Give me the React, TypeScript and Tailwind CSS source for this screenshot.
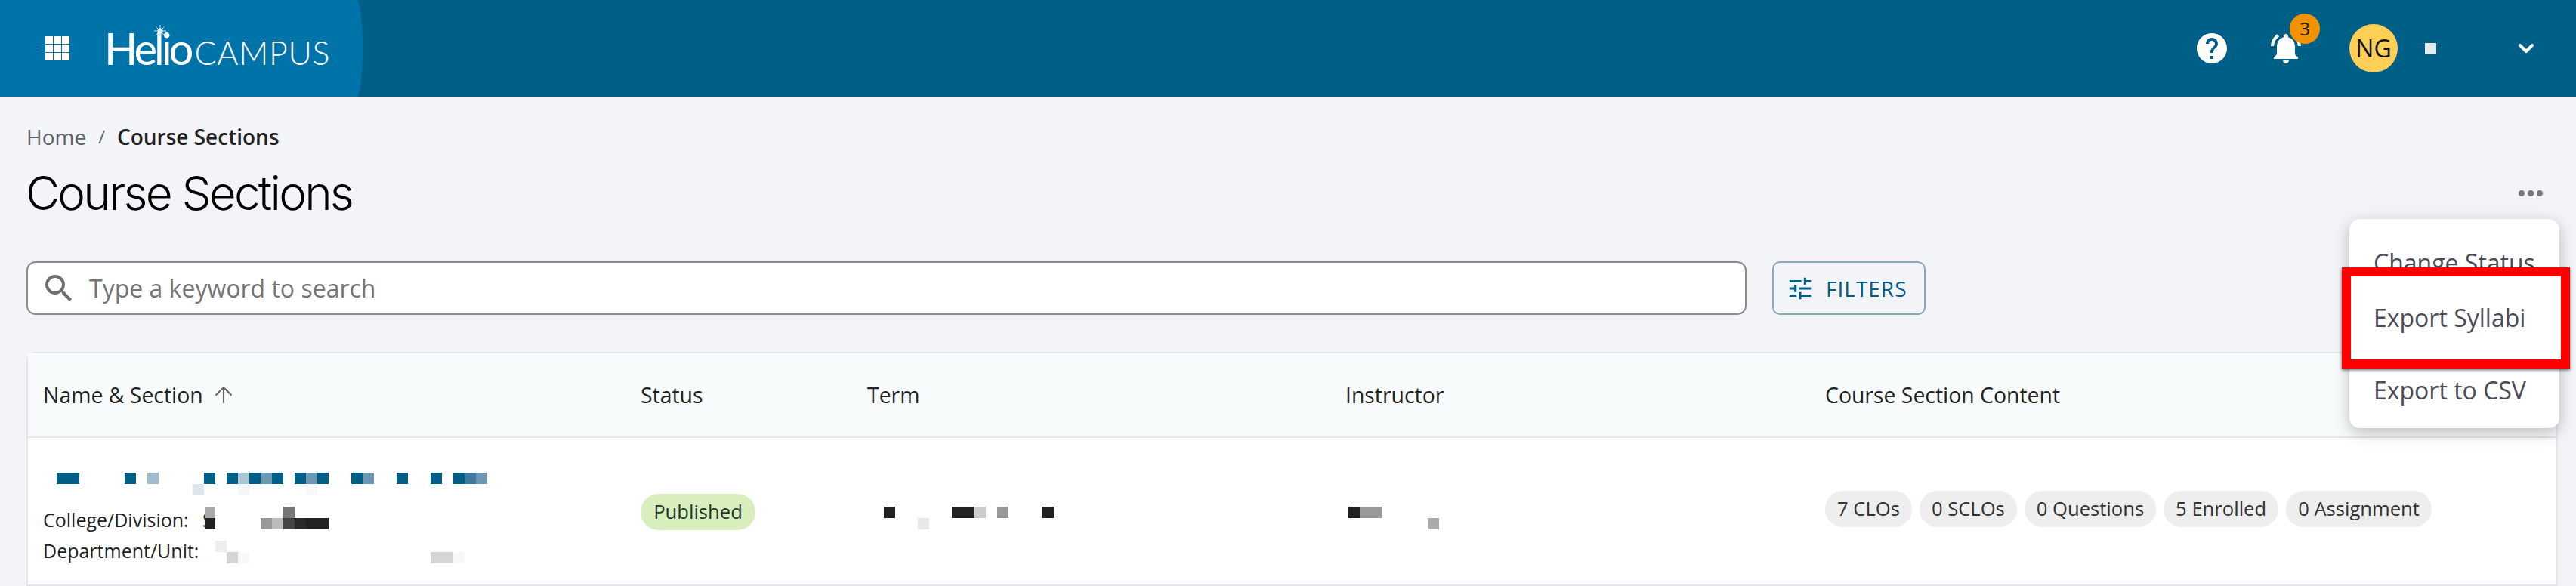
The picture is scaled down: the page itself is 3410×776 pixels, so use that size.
import React from 'react';
import { ArrowUp, ChevronDown } from 'lucide-react';
import { MdHelp, MdNotificationsActive, MdSearch, MdTune } from 'react-icons/md';

type Cell = [number, number, number, string];

// blurred-out text from the screenshot, 15px blocks
const Mosaic: React.FC<{ cells: Cell[]; width: number; height?: number; className?: string }> = ({
  cells,
  width,
  height = 30,
  className,
}) => (
  <svg width={width} height={height} className={className} shapeRendering="crispEdges">
    {cells.map(([x, y, w, fill], i) => (
      <rect key={i} x={x} y={y} width={w} height={15} fill={fill} />
    ))}
  </svg>
);

const B = '#005f87';
const M = '#6a97b2';

const titleCells: Cell[] = [
  [0, 0, 30, B], [90, 0, 15, B], [120, 0, 15, '#9fbccf'], [195, 0, 15, B], [225, 0, 15, B],
  [240, 0, 15, '#adc6d6'], [255, 0, 15, B], [270, 0, 15, M], [285, 0, 15, B], [315, 0, 15, B],
  [330, 0, 15, M], [345, 0, 15, B], [390, 0, 15, B], [405, 0, 15, M], [450, 0, 15, B],
  [495, 0, 15, B], [525, 0, 15, B], [540, 0, 15, '#3c7aa0'], [555, 0, 15, M],
  [180, 15, 15, '#dde6ed'], [240, 15, 15, '#f4f7f9'], [330, 15, 15, '#f6f8fb'],
];
const collegeCells: Cell[] = [
  [0, 0, 13, '#aaaaaa'], [0, 15, 13, '#222222'], [103, 0, 15, '#777777'], [73, 15, 15, '#999999'],
  [88, 15, 15, '#bbbbbb'], [103, 15, 15, '#444444'], [118, 15, 15, '#2a2a2a'], [133, 15, 30, '#222222'],
];
const deptCells: Cell[] = [
  [0, 0, 15, '#eeeeee'], [15, 15, 15, '#d5d5d5'], [30, 15, 15, '#f8f8f8'], [285, 15, 30, '#d5d5d5'], [315, 15, 15, '#f8f8f8'],
];
const termCells: Cell[] = [
  [0, 0, 15, '#222222'], [45, 15, 15, '#e8e8e8'], [90, 0, 30, '#222222'], [120, 0, 15, '#cccccc'],
  [150, 0, 15, '#999999'], [210, 0, 15, '#222222'],
];
const instructorCells: Cell[] = [
  [0, 0, 15, '#222222'], [15, 0, 30, '#999999'], [105, 15, 15, '#aaaaaa'],
];

const chips = ['7 CLOs', '0 SCLOs', '0 Questions', '5 Enrolled', '0 Assignment'];

const GridIcon = () => (
  <svg width="32" height="32" viewBox="0 0 32 32" fill="#fff" shapeRendering="crispEdges">
    {[0, 11, 22].map((y) =>
      [0, 11, 22].map((x) => <rect key={`${x}-${y}`} x={x} y={y} width="10" height="10" />),
    )}
  </svg>
);

const Logo = () => (
  <div className="relative ml-[46px] flex items-baseline font-['Lato',sans-serif] leading-none text-white">
    <span className="text-[58px] font-normal tracking-[-4px]">Helio</span>
    <span className="ml-[5px] text-[43px] font-light tracking-[0.7px]">CAMPUS</span>
    <svg width="16" height="16" viewBox="0 0 16 16" className="absolute left-[66px] top-[-2px]">
      <circle cx="8" cy="8" r="3.5" fill="#fff" />
      <path d="M8 0v16M0 8h16M2.5 2.5l11 11M13.5 2.5l-11 11" stroke="#cfe6f2" strokeWidth="1" />
    </svg>
  </div>
);

const Header = () => (
  <header className="flex h-[128px] bg-[#005f87] text-white">
    <div className="flex w-[480px] items-center rounded-tr-[8px_64px] rounded-br-[8px_64px] bg-[#0074a8] pl-[60px]">
      <GridIcon />
      <Logo />
    </div>
    <div className="flex flex-1 items-center">
      <MdHelp size={48} className="ml-[2424px]" />
      <div className="relative ml-[50px]">
        <MdNotificationsActive size={48} />
        <span className="absolute left-[29px] top-[-22px] flex h-[40px] w-[40px] items-center justify-center rounded-full bg-[#f29200] text-[24px] text-[#1a1a1a]">
          3
        </span>
      </div>
      <div className="ml-[60px] flex h-[64px] w-[64px] items-center justify-center rounded-full bg-[#ffcf56] text-[32px] text-[#111]">
        NG
      </div>
      <div className="ml-[36px] h-[15px] w-[15px] bg-[#e3ebf2]" />
      <ChevronDown size={32} strokeWidth={3} className="ml-[103px]" />
    </div>
  </header>
);

const Table = () => (
  <div className="mt-[49px] mr-[24px] h-[310px] rounded-tl-[12px] border-2 border-[#e4e6e9] bg-white">
    <div className="grid h-[112px] grid-cols-[811px_300px_633px_635px_1fr] items-center border-b-2 border-[#e4e6e9] bg-[#f8fbfc] text-[28.4px] text-[#222]">
      <div className="flex items-center pl-[20px]">
        Name &amp; Section
        <ArrowUp size={34} strokeWidth={1.5} className="ml-[10px] text-[#666]" />
      </div>
      <div>Status</div>
      <div>Term</div>
      <div>Instructor</div>
      <div>Course Section Content</div>
    </div>
    <div className="grid h-[194px] grid-cols-[811px_300px_633px_635px_1fr] items-start text-[25px] text-[#222]">
      <div className="pl-[20px] pt-[46px]">
        <Mosaic cells={titleCells} width={600} className="ml-[18px]" />
        <div className="mt-[15px] flex h-[30px] items-center leading-none">
          <span className="w-[211px] pt-[4px]">College/Division:</span>
          <span className="w-[4px] pt-[4px]">S</span>
          <Mosaic cells={collegeCells} width={170} />
        </div>
        <div className="mt-[15px] flex h-[30px] items-center leading-none">
          <span className="w-[228px] pb-[4px]">Department/Unit:</span>
          <Mosaic cells={deptCells} width={340} />
        </div>
      </div>
      <div className="pt-[74px]">
        <span className="flex h-[48px] w-[152px] items-center justify-center rounded-full bg-[#d8eebd] text-[25.6px] text-[#1f3a2c]">
          Published
        </span>
      </div>
      <div className="pl-[22px] pt-[91px]">
        <Mosaic cells={termCells} width={240} />
      </div>
      <div className="pl-[4px] pt-[91px]">
        <Mosaic cells={instructorCells} width={130} />
      </div>
      <div className="flex gap-[10px] whitespace-nowrap pt-[70px]">
        {chips.map((c) => (
          <span key={c} className="flex h-[48px] items-center rounded-full bg-[#eeeeee] px-[16px] text-[25.6px] text-[#333]">
            {c}
          </span>
        ))}
      </div>
    </div>
  </div>
);

const ActionsMenu = () => (
  <>
    <div className="absolute left-[3110px] top-[290px] h-[277px] w-[278px] rounded-[14px] bg-white pl-[32px] pt-[36px] text-[32px] text-[#4b4c58] shadow-[0_6px_20px_rgba(0,0,0,0.25)]">
      <div className="leading-[44px]">Change Status</div>
      <div className="mt-[125px] leading-[44px]">Export to CSV</div>
    </div>
    <div className="absolute left-[3100px] top-[354px] flex h-[134px] w-[302px] items-center border-[12px] border-[#ff0000] bg-white pl-[30px] text-[32px] text-[#4b4c58] shadow-[0_2px_4px_rgba(0,0,0,0.6)]">
      Export Syllabi
    </div>
  </>
);

export default function App() {
  return (
    <div className="relative h-[776px] w-[3410px] overflow-hidden bg-[#f2f4f8] font-['Open_Sans',sans-serif]">
      <Header />
      <main className="pl-[35px]">
        <nav className="mt-[36px] flex h-[34px] items-center text-[28px] leading-none">
          <span className="text-[#5f6368]">Home</span>
          <span className="mx-[16px] text-[24px] text-[#5f6368]">/</span>
          <span className="font-[560] text-[#222]">Course Sections</span>
        </nav>
        <div className="mt-[18px] flex h-[80px] items-center justify-between pr-[44px]">
          <h1 className="ml-[-1px] font-['Inter',sans-serif] text-[62px] font-light leading-none tracking-[-2.8px] text-black">
            Course Sections
          </h1>
          <div className="flex gap-[4px]">
            <span className="h-[8px] w-[8px] rounded-full bg-[#77787f]" />
            <span className="h-[8px] w-[8px] rounded-full bg-[#77787f]" />
            <span className="h-[8px] w-[8px] rounded-full bg-[#77787f]" />
          </div>
        </div>
        <div className="mt-[50px] flex items-center">
          <div className="flex h-[71px] w-[2277px] items-center rounded-[12px] border-2 border-[#8c8c8c] bg-white pl-[17px] text-[32px] text-[#757575]">
            <MdSearch size={48} className="text-[#6e6e6e]" />
            <span className="ml-[16px]">Type a keyword to search</span>
          </div>
          <button className="ml-[34px] flex h-[71px] w-[203px] items-center rounded-[10px] border-2 border-[#86a9c0] pl-[16px] text-[28px] tracking-[1px] text-[#005f87]">
            <MdTune size={38} />
            <span className="ml-[15px]">FILTERS</span>
          </button>
        </div>
        <Table />
      </main>
      <ActionsMenu />
    </div>
  );
}
